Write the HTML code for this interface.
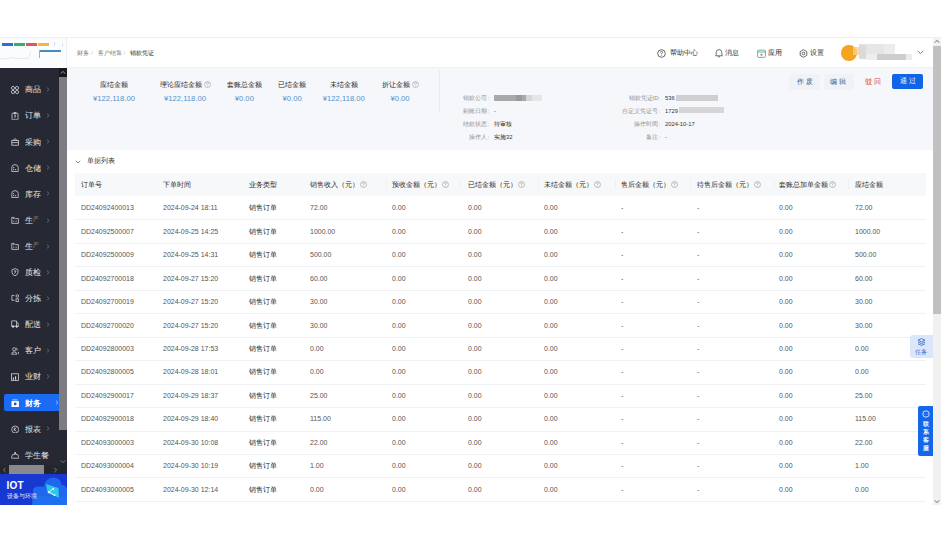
<!DOCTYPE html>
<html><head><meta charset="utf-8">
<style>
*{margin:0;padding:0;box-sizing:border-box}
html,body{width:941px;height:542px;overflow:hidden;background:#fff;font-family:"Liberation Sans",sans-serif;color:#333}
.a{position:absolute}
.t{position:absolute;white-space:nowrap;line-height:1}
#hdr{left:0;top:37px;width:933px;height:31px;background:#fff;border-top:1px solid #eceff3;border-bottom:1px solid #eef0f3}
#logo{left:0;top:37px;width:67px;height:31px;background:#fbfcfd;border-top:1px solid #eceff3;border-right:1px solid #eceff3}
#side{left:0;top:68px;width:67px;height:437px;background:#262933}
#sum{left:67px;top:68px;width:866px;height:82px;background:#f6f7fa}
#tbl{left:67px;top:150px;width:866px;height:355px;background:#fff}
#vs{left:933px;top:37px;width:8px;height:468px;background:#f1f1f1}
.nav{font-size:7px;color:#262626}
.si{position:absolute;left:0;width:59px;height:17px}
.si .tx{position:absolute;left:25px;top:4.5px;font-size:8px;color:#e8e8ea;line-height:1;white-space:nowrap}
.si .ch{position:absolute;left:46px;top:5px;font-size:7px;color:#8a8d96;line-height:1}
.si svg{position:absolute;left:11px;top:4px}
.lbl{font-size:7px;font-weight:500;color:#262626}
.val{font-size:7.7px;color:#5592cf}
.il{font-size:5.8px;color:#8f8f8f;text-align:right}
.iv{font-size:5.8px;color:#333}
.th{font-size:7px;color:#2b2b2b}
.td{font-size:7px;color:#555}
.dn{font-size:7.6px;transform:scaleX(.92);transform-origin:0 0}
.rowline{position:absolute;left:75px;width:851px;height:1px;background:#eff1f4}
.q{display:inline-block;vertical-align:top;margin-top:-0.3px}
</style></head><body>
<div id="hdr" class="a"></div>
<div id="logo" class="a"></div>
<div id="side" class="a"></div>
<div id="sum" class="a"></div>
<div id="tbl" class="a"></div>
<div id="vs" class="a"></div>

<!-- logo -->
<div class="a" style="left:2px;top:43px;width:11px;height:3px;background:#2c6fd1"></div>
<div class="a" style="left:14px;top:43px;width:11px;height:3px;background:#2bb56a"></div>
<div class="a" style="left:26px;top:43px;width:11px;height:3px;background:#e0555a"></div>
<div class="a" style="left:38px;top:43px;width:11px;height:3px;background:#f0b93a"></div>
<div class="a" style="left:54px;top:42px;width:1px;height:4px;background:#dde"></div>
<div class="a" style="left:62px;top:43px;width:1px;height:4px;background:#dde"></div>
<div class="a" style="left:39px;top:50px;width:22px;height:2px;background:#4b86c6"></div>
<div class="a" style="left:39px;top:50px;width:1px;height:8px;background:#8fb2da"></div>
<svg class="a" style="left:0;top:49px" width="38" height="12"><path d="M0 10 L8 9.5 L11 8.5 L14 9.5 L28 9.5 L31 3" fill="none" stroke="#dfe3e8" stroke-width="0.8"/></svg>
<!-- breadcrumb -->
<div class="t" style="left:77px;top:50.6px;font-size:5.9px;color:#767676">财务</div>
<div class="t" style="left:91px;top:50.6px;font-size:5.9px;color:#c8c8c8">/</div>
<div class="t" style="left:98px;top:50.6px;font-size:5.9px;color:#767676">客户结算</div>
<div class="t" style="left:123.5px;top:50.6px;font-size:5.9px;color:#c8c8c8">/</div>
<div class="t" style="left:130px;top:50.6px;font-size:5.9px;color:#1a1a1a">销款凭证</div>
<!-- right nav -->
<svg class="a" style="left:657px;top:48.5px" width="9" height="9" viewBox="0 0 9 9"><circle cx="4.5" cy="4.5" r="3.8" fill="none" stroke="#444" stroke-width="0.8"/><path d="M3.3 3.6 Q3.3 2.4 4.5 2.4 Q5.7 2.4 5.7 3.5 Q5.7 4.2 4.5 4.6 L4.5 5.4" fill="none" stroke="#444" stroke-width="0.7"/><circle cx="4.5" cy="6.5" r="0.45" fill="#444"/></svg>
<div class="t nav" style="left:669.5px;top:49px">帮助中心</div>
<svg class="a" style="left:715px;top:48px" width="8" height="10" viewBox="0 0 8 10"><path d="M1.2 7.2 L1.2 4.5 Q1.2 1.6 4 1.6 Q6.8 1.6 6.8 4.5 L6.8 7.2 L7.4 7.8 L0.6 7.8 Z" fill="none" stroke="#444" stroke-width="0.75"/><path d="M3 8.8 L5 8.8" stroke="#444" stroke-width="0.75"/></svg>
<div class="t nav" style="left:725px;top:49px">消息</div>
<svg class="a" style="left:757px;top:48.5px" width="9" height="9" viewBox="0 0 9 9"><rect x="0.6" y="1.2" width="7.8" height="7.2" rx="0.8" fill="none" stroke="#3aa890" stroke-width="0.8"/><path d="M0.6 3 L8.4 3" stroke="#3aa890" stroke-width="0.8"/><path d="M4.5 4.3 L4.5 7.3 M3 5.8 L6 5.8" stroke="#e07a7a" stroke-width="0.8"/></svg>
<div class="t nav" style="left:767.5px;top:49px">应用</div>
<svg class="a" style="left:798.5px;top:48.5px" width="9" height="9" viewBox="0 0 9 9"><path d="M4.5 0.7 L7.8 2.6 L7.8 6.4 L4.5 8.3 L1.2 6.4 L1.2 2.6 Z" fill="none" stroke="#444" stroke-width="0.8"/><circle cx="4.5" cy="4.5" r="1.3" fill="none" stroke="#444" stroke-width="0.8"/></svg>
<div class="t nav" style="left:810px;top:49px">设置</div>
<div class="a" style="left:841px;top:45px;width:15.5px;height:15.5px;border-radius:50%;background:#f4a420"></div>
<div class="a" style="left:853px;top:47px;width:7px;height:8px;background:#f8cf8a;opacity:.8"></div>
<div class="a" style="left:859px;top:43.5px;width:36px;height:10px;background:#e6e6e6"></div>
<div class="a" style="left:859px;top:45px;width:7px;height:14px;background:#dadada"></div>
<div class="a" style="left:884px;top:43.5px;width:11px;height:10px;background:#ececec"></div>
<div class="a" style="left:866px;top:53.5px;width:11px;height:6px;background:#eeeeee"></div>
<div class="a" style="left:877px;top:53.5px;width:29px;height:6px;background:#cdcdcd"></div>
<div class="a" style="left:906px;top:53.5px;width:6px;height:6px;background:#ebebeb"></div>
<svg class="a" style="left:917px;top:50px" width="7" height="5" viewBox="0 0 7 5"><path d="M0.8 1 L3.5 3.6 L6.2 1" fill="none" stroke="#555" stroke-width="0.8"/></svg>
<!-- sidebar -->
<svg class="a" style="left:11px;top:85.5px" width="8" height="8" viewBox="0 0 8 8" fill="none" stroke="#dcdde0" stroke-width="0.75"><circle cx="2" cy="2" r="1.6"/><circle cx="6" cy="2" r="1.6"/><circle cx="2" cy="6" r="1.6"/><circle cx="6" cy="6" r="1.6"/></svg>
<div class="t" style="left:25px;top:85.3px;font-size:8.3px;color:#e6e7ea">商品</div>
<svg class="a" style="left:46px;top:87.0px" width="4" height="5" viewBox="0 0 4 5"><path d="M1 0.6 L3 2.5 L1 4.4" fill="none" stroke="#7d808a" stroke-width="0.7"/></svg>
<svg class="a" style="left:11px;top:111.6px" width="8" height="8" viewBox="0 0 8 8" fill="none" stroke="#dcdde0" stroke-width="0.75"><rect x="1" y="1.2" width="6" height="6.6" rx="0.6"/><path d="M3 0.6 L5 0.6 L5 1.8 L3 1.8 Z"/><path d="M3.2 3.6 L4.6 3.6 L3.6 6.2"/></svg>
<div class="t" style="left:25px;top:111.4px;font-size:8.3px;color:#e6e7ea">订单</div>
<svg class="a" style="left:46px;top:113.1px" width="4" height="5" viewBox="0 0 4 5"><path d="M1 0.6 L3 2.5 L1 4.4" fill="none" stroke="#7d808a" stroke-width="0.7"/></svg>
<svg class="a" style="left:11px;top:137.7px" width="8" height="8" viewBox="0 0 8 8" fill="none" stroke="#dcdde0" stroke-width="0.75"><rect x="0.8" y="2.6" width="6.8" height="4.6"/><path d="M0.8 4.6 L7.6 4.6"/><path d="M2.6 2.6 Q2.6 0.9 4.1 0.9 Q5.6 0.9 5.6 2.6"/></svg>
<div class="t" style="left:25px;top:137.5px;font-size:8.3px;color:#e6e7ea">采购</div>
<svg class="a" style="left:46px;top:139.2px" width="4" height="5" viewBox="0 0 4 5"><path d="M1 0.6 L3 2.5 L1 4.4" fill="none" stroke="#7d808a" stroke-width="0.7"/></svg>
<svg class="a" style="left:11px;top:163.8px" width="8" height="8" viewBox="0 0 8 8" fill="none" stroke="#dcdde0" stroke-width="0.75"><path d="M0.8 7.5 L0.8 3.2 Q0.9 0.8 4 0.6 Q7.1 0.8 7.2 3.2 L7.2 7.5 Z"/><circle cx="2.7" cy="3.6" r="0.6" fill="#dcdde0" stroke="none"/><circle cx="2.7" cy="5.6" r="0.6" fill="#dcdde0" stroke="none"/><circle cx="4.7" cy="5.6" r="0.6" fill="#dcdde0" stroke="none"/></svg>
<div class="t" style="left:25px;top:163.6px;font-size:8.3px;color:#e6e7ea">仓储</div>
<svg class="a" style="left:46px;top:165.3px" width="4" height="5" viewBox="0 0 4 5"><path d="M1 0.6 L3 2.5 L1 4.4" fill="none" stroke="#7d808a" stroke-width="0.7"/></svg>
<svg class="a" style="left:11px;top:189.9px" width="8" height="8" viewBox="0 0 8 8" fill="none" stroke="#dcdde0" stroke-width="0.75"><path d="M0.8 7.5 L0.8 3.2 Q0.9 0.8 4 0.6 Q7.1 0.8 7.2 3.2 L7.2 7.5 Z"/><circle cx="2.7" cy="3.6" r="0.6" fill="#dcdde0" stroke="none"/><circle cx="2.7" cy="5.6" r="0.6" fill="#dcdde0" stroke="none"/><circle cx="4.7" cy="5.6" r="0.6" fill="#dcdde0" stroke="none"/></svg>
<div class="t" style="left:25px;top:189.7px;font-size:8.3px;color:#e6e7ea">库存</div>
<svg class="a" style="left:46px;top:191.4px" width="4" height="5" viewBox="0 0 4 5"><path d="M1 0.6 L3 2.5 L1 4.4" fill="none" stroke="#7d808a" stroke-width="0.7"/></svg>
<svg class="a" style="left:11px;top:216.0px" width="8" height="8" viewBox="0 0 8 8" fill="none" stroke="#dcdde0" stroke-width="0.75"><path d="M0.8 7.4 L0.8 1.2 L2.6 2.6 L2.6 1.2 L4.4 2.6 L7.4 2.6 L7.4 7.4 Z"/><path d="M2.2 5.2 L3.4 5.2 M4.6 5.2 L5.8 5.2"/></svg>
<div class="t" style="left:25px;top:215.8px;font-size:8.3px;color:#e6e7ea">生<span style="opacity:.55;font-size:6px;vertical-align:2px">产</span></div>
<svg class="a" style="left:46px;top:217.5px" width="4" height="5" viewBox="0 0 4 5"><path d="M1 0.6 L3 2.5 L1 4.4" fill="none" stroke="#7d808a" stroke-width="0.7"/></svg>
<svg class="a" style="left:11px;top:242.1px" width="8" height="8" viewBox="0 0 8 8" fill="none" stroke="#dcdde0" stroke-width="0.75"><path d="M0.8 7.4 L0.8 1.2 L2.6 2.6 L2.6 1.2 L4.4 2.6 L7.4 2.6 L7.4 7.4 Z"/><path d="M2.2 5.2 L3.4 5.2 M4.6 5.2 L5.8 5.2"/></svg>
<div class="t" style="left:25px;top:241.9px;font-size:8.3px;color:#e6e7ea">生<span style="opacity:.55;font-size:6px;vertical-align:2px">产</span></div>
<svg class="a" style="left:46px;top:243.6px" width="4" height="5" viewBox="0 0 4 5"><path d="M1 0.6 L3 2.5 L1 4.4" fill="none" stroke="#7d808a" stroke-width="0.7"/></svg>
<svg class="a" style="left:11px;top:268.2px" width="8" height="8" viewBox="0 0 8 8" fill="none" stroke="#dcdde0" stroke-width="0.75"><path d="M4 0.6 L7 1.8 L7 4.4 Q7 6.8 4 7.8 Q1 6.8 1 4.4 L1 1.8 Z"/><path d="M3 3 L5 3 L3.6 5.6"/></svg>
<div class="t" style="left:25px;top:268.0px;font-size:8.3px;color:#e6e7ea">质检</div>
<svg class="a" style="left:46px;top:269.7px" width="4" height="5" viewBox="0 0 4 5"><path d="M1 0.6 L3 2.5 L1 4.4" fill="none" stroke="#7d808a" stroke-width="0.7"/></svg>
<svg class="a" style="left:11px;top:294.3px" width="8" height="8" viewBox="0 0 8 8" fill="none" stroke="#dcdde0" stroke-width="0.75"><path d="M3.4 1.4 L0.9 1.4 L0.9 6.3 L3.4 6.3"/><circle cx="6.3" cy="2" r="1.3"/><rect x="5" y="4.9" width="2.8" height="2.7"/></svg>
<div class="t" style="left:25px;top:294.1px;font-size:8.3px;color:#e6e7ea">分拣</div>
<svg class="a" style="left:46px;top:295.8px" width="4" height="5" viewBox="0 0 4 5"><path d="M1 0.6 L3 2.5 L1 4.4" fill="none" stroke="#7d808a" stroke-width="0.7"/></svg>
<svg class="a" style="left:11px;top:320.4px" width="8" height="8" viewBox="0 0 8 8" fill="none" stroke="#dcdde0" stroke-width="0.75"><path d="M0.7 6.2 L0.7 0.9 L5.6 0.9 L5.6 6.2 Z"/><path d="M5.6 2.8 L6.8 2.8 L7.8 4.4 L7.8 6.2 L5.6 6.2"/><circle cx="2" cy="6.6" r="0.8" fill="#dcdde0"/><circle cx="5.7" cy="6.6" r="0.8" fill="#dcdde0"/></svg>
<div class="t" style="left:25px;top:320.2px;font-size:8.3px;color:#e6e7ea">配送</div>
<svg class="a" style="left:46px;top:321.9px" width="4" height="5" viewBox="0 0 4 5"><path d="M1 0.6 L3 2.5 L1 4.4" fill="none" stroke="#7d808a" stroke-width="0.7"/></svg>
<svg class="a" style="left:11px;top:346.5px" width="8" height="8" viewBox="0 0 8 8" fill="none" stroke="#dcdde0" stroke-width="0.75"><circle cx="3.2" cy="2.3" r="1.6"/><path d="M5.2 0.9 Q6.8 1.3 6 3.4"/><path d="M0.6 7.2 Q0.6 4.9 3.2 4.9 Q5.8 4.9 5.8 7.2 Z"/><path d="M7.4 4.9 L7.4 7.2"/></svg>
<div class="t" style="left:25px;top:346.3px;font-size:8.3px;color:#e6e7ea">客户</div>
<svg class="a" style="left:46px;top:348.0px" width="4" height="5" viewBox="0 0 4 5"><path d="M1 0.6 L3 2.5 L1 4.4" fill="none" stroke="#7d808a" stroke-width="0.7"/></svg>
<svg class="a" style="left:11px;top:372.6px" width="8" height="8" viewBox="0 0 8 8" fill="none" stroke="#dcdde0" stroke-width="0.75"><rect x="0.6" y="0.8" width="7" height="6.6"/><path d="M2.4 6.8 L2.4 4.6 M4.6 6.8 L4.6 3.2" stroke-width="1.1"/></svg>
<div class="t" style="left:25px;top:372.4px;font-size:8.3px;color:#e6e7ea">业财</div>
<svg class="a" style="left:46px;top:374.1px" width="4" height="5" viewBox="0 0 4 5"><path d="M1 0.6 L3 2.5 L1 4.4" fill="none" stroke="#7d808a" stroke-width="0.7"/></svg>
<div class="a" style="left:4px;top:394px;width:55px;height:17px;background:#1a6cf5;border-radius:2px 0 0 2px"></div>
<svg class="a" style="left:11px;top:398.8px" width="9" height="9" viewBox="0 0 9 9"><path d="M1.5 0.9 L6.5 0.9" stroke="#fff" stroke-width="0.7"/><rect x="0.5" y="2.1" width="7.4" height="5.9" fill="#fff"/><circle cx="4.2" cy="4.9" r="1.4" fill="#2a4fa8"/></svg>
<div class="t" style="left:25px;top:398.5px;font-size:8.3px;font-weight:bold;color:#fff">财务</div>
<svg class="a" style="left:55px;top:400.2px" width="4" height="5" viewBox="0 0 4 5"><path d="M1 0.6 L3 2.5 L1 4.4" fill="none" stroke="#cfe0ff" stroke-width="0.7"/></svg>
<svg class="a" style="left:11px;top:424.8px" width="8" height="8" viewBox="0 0 8 8" fill="none" stroke="#dcdde0" stroke-width="0.75"><circle cx="4.2" cy="4.5" r="3.5"/><path d="M5.4 2.6 L3.3 4.6 L5.4 6.2 M3.3 2.6 L3.3 5.8"/></svg>
<div class="t" style="left:25px;top:424.6px;font-size:8.3px;color:#e6e7ea">报表</div>
<svg class="a" style="left:46px;top:426.3px" width="4" height="5" viewBox="0 0 4 5"><path d="M1 0.6 L3 2.5 L1 4.4" fill="none" stroke="#7d808a" stroke-width="0.7"/></svg>
<svg class="a" style="left:11px;top:450.9px" width="8" height="8" viewBox="0 0 8 8" fill="none" stroke="#dcdde0" stroke-width="0.75"><path d="M0.7 7.2 L7.7 7.2 L7.7 5.8 Q7.7 3.1 4.2 3.1 Q0.7 3.1 0.7 5.8 Z"/><path d="M3.4 2.4 L4.2 1.2 L5 2.4 Z" fill="#dcdde0"/></svg>
<div class="t" style="left:25px;top:450.7px;font-size:8.3px;color:#e6e7ea">学生餐</div>
<div class="a" style="left:59px;top:68px;width:8px;height:9px;background:#17191f"></div>
<svg class="a" style="left:60px;top:70px" width="6" height="5" viewBox="0 0 6 5"><path d="M0.8 3.6 L3 1.4 L5.2 3.6" fill="none" stroke="#aaa" stroke-width="0.9"/></svg>
<div class="a" style="left:59px;top:77px;width:8px;height:353px;background:#7c7c82"></div>
<svg class="a" style="left:60px;top:459px" width="6" height="5" viewBox="0 0 6 5"><path d="M0.8 1.4 L3 3.6 L5.2 1.4" fill="none" stroke="#888" stroke-width="0.9"/></svg>
<div class="a" style="left:0;top:465px;width:67px;height:9px;background:#23262d"></div>
<div class="a" style="left:9px;top:465px;width:35px;height:9px;background:#8a8a8e"></div>
<svg class="a" style="left:2px;top:467px" width="5" height="6" viewBox="0 0 5 6"><path d="M3.6 0.8 L1.4 3 L3.6 5.2" fill="none" stroke="#888" stroke-width="0.9"/></svg>
<svg class="a" style="left:53px;top:467px" width="5" height="6" viewBox="0 0 5 6"><path d="M1.4 0.8 L3.6 3 L1.4 5.2" fill="none" stroke="#888" stroke-width="0.9"/></svg>
<div class="a" style="left:0;top:474px;width:67px;height:31px;background:#1739d2;overflow:hidden">
<svg class="a" style="left:0;top:0" width="67" height="31" viewBox="0 0 67 31">
<path d="M32 31 L33 16 Q34 12 40 12.5 L44 12.5 Q45 4 53.5 3.5 Q61 4 61.5 11 Q67 11 67 16 L67 31 Z" fill="#1f68ee"/>
<path d="M33 31 L34 22 L60 22 L67 24 L67 31 Z" fill="#2274f3" opacity=".6"/>
<path d="M46 10 L58.5 14 L59 23.7 L47.5 19 Z" fill="#2ec6ea"/>
<path d="M53.3 14.8 L48.8 18 L54.6 21.2" fill="none" stroke="#dffaff" stroke-width="0.9"/>
<circle cx="53.3" cy="14.8" r="0.9" fill="#fff"/><circle cx="48.8" cy="18" r="0.9" fill="#fff"/><circle cx="54.6" cy="21.2" r="0.9" fill="#fff"/>
</svg>
</div>
<div class="t" style="left:6.5px;top:481px;font-size:10px;font-weight:bold;color:#fff;letter-spacing:0.2px">IOT</div>
<div class="t" style="left:6.5px;top:493.8px;font-size:5.7px;font-weight:500;color:#e6edff">设备与环境</div>
<!-- summary -->
<div class="t lbl" style="left:54px;width:120px;text-align:center;top:81.4px">应结金额</div>
<div class="t val" style="left:54px;width:120px;text-align:center;top:95.2px">¥122,118.00</div>
<div class="t lbl" style="left:125px;width:120px;text-align:center;top:81.4px">理论应结金额<svg class="q" style="margin-left:2px" width="7" height="7" viewBox="0 0 7 7"><circle cx="3.5" cy="3.5" r="3" fill="none" stroke="#9a9a9a" stroke-width="0.6"/><path d="M2.5 2.7 Q2.5 1.7 3.5 1.7 Q4.5 1.7 4.5 2.6 Q4.5 3.2 3.5 3.6 L3.5 4.2" fill="none" stroke="#9a9a9a" stroke-width="0.6"/><circle cx="3.5" cy="5.2" r="0.35" fill="#9a9a9a"/></svg></div>
<div class="t val" style="left:125px;width:120px;text-align:center;top:95.2px">¥122,118.00</div>
<div class="t lbl" style="left:184.3px;width:120px;text-align:center;top:81.4px">套账总金额</div>
<div class="t val" style="left:184.3px;width:120px;text-align:center;top:95.2px">¥0.00</div>
<div class="t lbl" style="left:232.2px;width:120px;text-align:center;top:81.4px">已结金额</div>
<div class="t val" style="left:232.2px;width:120px;text-align:center;top:95.2px">¥0.00</div>
<div class="t lbl" style="left:283.8px;width:120px;text-align:center;top:81.4px">未结金额</div>
<div class="t val" style="left:283.8px;width:120px;text-align:center;top:95.2px">¥122,118.00</div>
<div class="t lbl" style="left:340px;width:120px;text-align:center;top:81.4px">折让金额<svg class="q" style="margin-left:2px" width="7" height="7" viewBox="0 0 7 7"><circle cx="3.5" cy="3.5" r="3" fill="none" stroke="#9a9a9a" stroke-width="0.6"/><path d="M2.5 2.7 Q2.5 1.7 3.5 1.7 Q4.5 1.7 4.5 2.6 Q4.5 3.2 3.5 3.6 L3.5 4.2" fill="none" stroke="#9a9a9a" stroke-width="0.6"/><circle cx="3.5" cy="5.2" r="0.35" fill="#9a9a9a"/></svg></div>
<div class="t val" style="left:340px;width:120px;text-align:center;top:95.2px">¥0.00</div>
<div class="a" style="left:439px;top:70px;width:1px;height:42px;background:#e6e9ee"></div>
<div class="t il" style="left:400px;width:89px;top:95.50px">销款公司:</div>
<div class="a" style="left:494px;top:95.2px;width:32px;height:5.6px;background:#a9a9ab"></div><div class="a" style="left:526px;top:95.2px;width:6px;height:5.6px;background:#d6d6d8"></div><div class="a" style="left:516px;top:95.2px;width:6px;height:5.6px;background:#9a9a9c"></div><div class="a" style="left:532px;top:95.2px;width:10px;height:5.6px;background:#e6e6e8"></div>
<div class="t il" style="left:400px;width:89px;top:108.50px">到账日期:</div>
<div class="t iv" style="left:494px;top:108.50px">-</div>
<div class="t il" style="left:400px;width:89px;top:121.50px">结款状态:</div>
<div class="t iv" style="left:494px;top:121.50px">待审核</div>
<div class="t il" style="left:400px;width:89px;top:134.50px">操作人:</div>
<div class="t iv" style="left:494px;top:134.50px">实施32</div>
<div class="t il" style="left:560px;width:100px;top:95.50px">销款凭证ID:</div>
<div class="t iv" style="left:665px;top:95.50px">536</div><div class="a" style="left:676px;top:95.2px;width:42px;height:5.6px;background:#cfcfd1"></div>
<div class="t il" style="left:560px;width:100px;top:108.50px">自定义凭证号:</div>
<div class="t iv" style="left:665px;top:108.50px">1729</div><div class="a" style="left:679px;top:107.2px;width:45px;height:5.4px;background:#d6d6d8"></div>
<div class="t il" style="left:560px;width:100px;top:121.50px">操作时间:</div>
<div class="t iv" style="left:665px;top:121.50px">2024-10-17</div>
<div class="t il" style="left:560px;width:100px;top:134.50px">备注:</div>
<div class="t iv" style="left:665px;top:134.50px">-</div>
<div class="a" style="left:789px;top:74px;width:31px;height:16px;background:#eff2f6;border-radius:2px"></div>
<div class="t" style="left:796.5px;top:78.5px;font-size:6.8px;color:#2f6299;letter-spacing:2px">作废</div>
<div class="a" style="left:824px;top:74px;width:30px;height:16px;background:#eff2f6;border-radius:2px"></div>
<div class="t" style="left:830px;top:78.5px;font-size:6.8px;color:#2f6299;letter-spacing:2px">编辑</div>
<div class="t" style="left:865px;top:78.5px;font-size:6.8px;color:#d3464d;letter-spacing:2px">驳回</div>
<div class="a" style="left:892px;top:73.5px;width:31px;height:15.5px;background:#1264e6;border-radius:2px"></div>
<div class="t" style="left:899.5px;top:78px;font-size:6.8px;color:#fff;letter-spacing:2px">通过</div>
<!-- table -->
<svg class="a" style="left:75px;top:159.5px" width="6" height="4" viewBox="0 0 6 4"><path d="M0.8 0.8 L3 3 L5.2 0.8" fill="none" stroke="#666" stroke-width="0.8"/></svg>
<div class="t" style="left:87px;top:158.3px;font-size:6.6px;color:#333">单据列表</div>
<div class="a" style="left:75px;top:172.5px;width:851px;height:23.5px;background:#f7f8fa"></div>
<div class="t th" style="left:81px;top:181px">订单号</div>
<div class="t th" style="left:162.5px;top:181px">下单时间</div>
<div class="t th" style="left:248.8px;top:181px">业务类型</div>
<div class="t th" style="left:310px;top:181px">销售收入（元）<svg class="q" style="margin-left:1px" width="7" height="7" viewBox="0 0 7 7"><circle cx="3.5" cy="3.5" r="3" fill="none" stroke="#9a9a9a" stroke-width="0.6"/><path d="M2.5 2.7 Q2.5 1.7 3.5 1.7 Q4.5 1.7 4.5 2.6 Q4.5 3.2 3.5 3.6 L3.5 4.2" fill="none" stroke="#9a9a9a" stroke-width="0.6"/><circle cx="3.5" cy="5.2" r="0.35" fill="#9a9a9a"/></svg></div>
<div class="t th" style="left:392px;top:181px">预收金额（元）<svg class="q" style="margin-left:1px" width="7" height="7" viewBox="0 0 7 7"><circle cx="3.5" cy="3.5" r="3" fill="none" stroke="#9a9a9a" stroke-width="0.6"/><path d="M2.5 2.7 Q2.5 1.7 3.5 1.7 Q4.5 1.7 4.5 2.6 Q4.5 3.2 3.5 3.6 L3.5 4.2" fill="none" stroke="#9a9a9a" stroke-width="0.6"/><circle cx="3.5" cy="5.2" r="0.35" fill="#9a9a9a"/></svg></div>
<div class="t th" style="left:467.6px;top:181px">已结金额（元）<svg class="q" style="margin-left:1px" width="7" height="7" viewBox="0 0 7 7"><circle cx="3.5" cy="3.5" r="3" fill="none" stroke="#9a9a9a" stroke-width="0.6"/><path d="M2.5 2.7 Q2.5 1.7 3.5 1.7 Q4.5 1.7 4.5 2.6 Q4.5 3.2 3.5 3.6 L3.5 4.2" fill="none" stroke="#9a9a9a" stroke-width="0.6"/><circle cx="3.5" cy="5.2" r="0.35" fill="#9a9a9a"/></svg></div>
<div class="t th" style="left:543.5px;top:181px">未结金额（元）<svg class="q" style="margin-left:1px" width="7" height="7" viewBox="0 0 7 7"><circle cx="3.5" cy="3.5" r="3" fill="none" stroke="#9a9a9a" stroke-width="0.6"/><path d="M2.5 2.7 Q2.5 1.7 3.5 1.7 Q4.5 1.7 4.5 2.6 Q4.5 3.2 3.5 3.6 L3.5 4.2" fill="none" stroke="#9a9a9a" stroke-width="0.6"/><circle cx="3.5" cy="5.2" r="0.35" fill="#9a9a9a"/></svg></div>
<div class="t th" style="left:620.8px;top:181px">售后金额（元）<svg class="q" style="margin-left:1px" width="7" height="7" viewBox="0 0 7 7"><circle cx="3.5" cy="3.5" r="3" fill="none" stroke="#9a9a9a" stroke-width="0.6"/><path d="M2.5 2.7 Q2.5 1.7 3.5 1.7 Q4.5 1.7 4.5 2.6 Q4.5 3.2 3.5 3.6 L3.5 4.2" fill="none" stroke="#9a9a9a" stroke-width="0.6"/><circle cx="3.5" cy="5.2" r="0.35" fill="#9a9a9a"/></svg></div>
<div class="t th" style="left:696.7px;top:181px">待售后金额（元）<svg class="q" style="margin-left:1px" width="7" height="7" viewBox="0 0 7 7"><circle cx="3.5" cy="3.5" r="3" fill="none" stroke="#9a9a9a" stroke-width="0.6"/><path d="M2.5 2.7 Q2.5 1.7 3.5 1.7 Q4.5 1.7 4.5 2.6 Q4.5 3.2 3.5 3.6 L3.5 4.2" fill="none" stroke="#9a9a9a" stroke-width="0.6"/><circle cx="3.5" cy="5.2" r="0.35" fill="#9a9a9a"/></svg></div>
<div class="t th" style="left:778.5px;top:181px">套账总加单金额<svg class="q" style="margin-left:1.5px" width="7" height="7" viewBox="0 0 7 7"><circle cx="3.5" cy="3.5" r="3" fill="none" stroke="#9a9a9a" stroke-width="0.6"/><path d="M2.5 2.7 Q2.5 1.7 3.5 1.7 Q4.5 1.7 4.5 2.6 Q4.5 3.2 3.5 3.6 L3.5 4.2" fill="none" stroke="#9a9a9a" stroke-width="0.6"/><circle cx="3.5" cy="5.2" r="0.35" fill="#9a9a9a"/></svg></div>
<div class="t th" style="left:855px;top:181px">应结金额</div>
<div class="a" style="left:385.8px;top:179px;width:1px;height:10px;background:#eef0f2"></div>
<div class="a" style="left:460px;top:179px;width:1px;height:10px;background:#eef0f2"></div>
<div class="a" style="left:538px;top:179px;width:1px;height:10px;background:#eef0f2"></div>
<div class="a" style="left:614.9px;top:179px;width:1px;height:10px;background:#eef0f2"></div>
<div class="a" style="left:689.5px;top:179px;width:1px;height:10px;background:#eef0f2"></div>
<div class="a" style="left:773.5px;top:179px;width:1px;height:10px;background:#eef0f2"></div>
<div class="a" style="left:848.1px;top:179px;width:1px;height:10px;background:#eef0f2"></div>
<div class="rowline" style="top:219.45px"></div>
<div class="t td dn" style="left:81px;top:204.27px">DD24092400013</div>
<div class="t td dn" style="left:162.5px;top:204.27px">2024-09-24 18:11</div>
<div class="t td" style="left:249px;top:204.32px;color:#222">销售订单</div>
<div class="t td dn" style="left:310px;top:204.27px">72.00</div>
<div class="t td dn" style="left:392px;top:204.27px">0.00</div>
<div class="t td dn" style="left:467.6px;top:204.27px">0.00</div>
<div class="t td dn" style="left:543.5px;top:204.27px">0.00</div>
<div class="t td dn" style="left:621px;top:204.27px">-</div>
<div class="t td dn" style="left:697px;top:204.27px">-</div>
<div class="t td dn" style="left:778.5px;top:204.27px">0.00</div>
<div class="t td dn" style="left:855px;top:204.27px">72.00</div>
<div class="rowline" style="top:242.90px"></div>
<div class="t td dn" style="left:81px;top:227.72px">DD24092500007</div>
<div class="t td dn" style="left:162.5px;top:227.72px">2024-09-25 14:25</div>
<div class="t td" style="left:249px;top:227.77px;color:#222">销售订单</div>
<div class="t td dn" style="left:310px;top:227.72px">1000.00</div>
<div class="t td dn" style="left:392px;top:227.72px">0.00</div>
<div class="t td dn" style="left:467.6px;top:227.72px">0.00</div>
<div class="t td dn" style="left:543.5px;top:227.72px">0.00</div>
<div class="t td dn" style="left:621px;top:227.72px">-</div>
<div class="t td dn" style="left:697px;top:227.72px">-</div>
<div class="t td dn" style="left:778.5px;top:227.72px">0.00</div>
<div class="t td dn" style="left:855px;top:227.72px">1000.00</div>
<div class="rowline" style="top:266.35px"></div>
<div class="t td dn" style="left:81px;top:251.17px">DD24092500009</div>
<div class="t td dn" style="left:162.5px;top:251.17px">2024-09-25 14:31</div>
<div class="t td" style="left:249px;top:251.22px;color:#222">销售订单</div>
<div class="t td dn" style="left:310px;top:251.17px">500.00</div>
<div class="t td dn" style="left:392px;top:251.17px">0.00</div>
<div class="t td dn" style="left:467.6px;top:251.17px">0.00</div>
<div class="t td dn" style="left:543.5px;top:251.17px">0.00</div>
<div class="t td dn" style="left:621px;top:251.17px">-</div>
<div class="t td dn" style="left:697px;top:251.17px">-</div>
<div class="t td dn" style="left:778.5px;top:251.17px">0.00</div>
<div class="t td dn" style="left:855px;top:251.17px">500.00</div>
<div class="rowline" style="top:289.80px"></div>
<div class="t td dn" style="left:81px;top:274.63px">DD24092700018</div>
<div class="t td dn" style="left:162.5px;top:274.63px">2024-09-27 15:20</div>
<div class="t td" style="left:249px;top:274.68px;color:#222">销售订单</div>
<div class="t td dn" style="left:310px;top:274.63px">60.00</div>
<div class="t td dn" style="left:392px;top:274.63px">0.00</div>
<div class="t td dn" style="left:467.6px;top:274.63px">0.00</div>
<div class="t td dn" style="left:543.5px;top:274.63px">0.00</div>
<div class="t td dn" style="left:621px;top:274.63px">-</div>
<div class="t td dn" style="left:697px;top:274.63px">-</div>
<div class="t td dn" style="left:778.5px;top:274.63px">0.00</div>
<div class="t td dn" style="left:855px;top:274.63px">60.00</div>
<div class="rowline" style="top:313.25px"></div>
<div class="t td dn" style="left:81px;top:298.08px">DD24092700019</div>
<div class="t td dn" style="left:162.5px;top:298.08px">2024-09-27 15:20</div>
<div class="t td" style="left:249px;top:298.13px;color:#222">销售订单</div>
<div class="t td dn" style="left:310px;top:298.08px">30.00</div>
<div class="t td dn" style="left:392px;top:298.08px">0.00</div>
<div class="t td dn" style="left:467.6px;top:298.08px">0.00</div>
<div class="t td dn" style="left:543.5px;top:298.08px">0.00</div>
<div class="t td dn" style="left:621px;top:298.08px">-</div>
<div class="t td dn" style="left:697px;top:298.08px">-</div>
<div class="t td dn" style="left:778.5px;top:298.08px">0.00</div>
<div class="t td dn" style="left:855px;top:298.08px">30.00</div>
<div class="rowline" style="top:336.70px"></div>
<div class="t td dn" style="left:81px;top:321.53px">DD24092700020</div>
<div class="t td dn" style="left:162.5px;top:321.53px">2024-09-27 15:20</div>
<div class="t td" style="left:249px;top:321.58px;color:#222">销售订单</div>
<div class="t td dn" style="left:310px;top:321.53px">30.00</div>
<div class="t td dn" style="left:392px;top:321.53px">0.00</div>
<div class="t td dn" style="left:467.6px;top:321.53px">0.00</div>
<div class="t td dn" style="left:543.5px;top:321.53px">0.00</div>
<div class="t td dn" style="left:621px;top:321.53px">-</div>
<div class="t td dn" style="left:697px;top:321.53px">-</div>
<div class="t td dn" style="left:778.5px;top:321.53px">0.00</div>
<div class="t td dn" style="left:855px;top:321.53px">30.00</div>
<div class="rowline" style="top:360.15px"></div>
<div class="t td dn" style="left:81px;top:344.98px">DD24092800003</div>
<div class="t td dn" style="left:162.5px;top:344.98px">2024-09-28 17:53</div>
<div class="t td" style="left:249px;top:345.03px;color:#222">销售订单</div>
<div class="t td dn" style="left:310px;top:344.98px">0.00</div>
<div class="t td dn" style="left:392px;top:344.98px">0.00</div>
<div class="t td dn" style="left:467.6px;top:344.98px">0.00</div>
<div class="t td dn" style="left:543.5px;top:344.98px">0.00</div>
<div class="t td dn" style="left:621px;top:344.98px">-</div>
<div class="t td dn" style="left:697px;top:344.98px">-</div>
<div class="t td dn" style="left:778.5px;top:344.98px">0.00</div>
<div class="t td dn" style="left:855px;top:344.98px">0.00</div>
<div class="rowline" style="top:383.60px"></div>
<div class="t td dn" style="left:81px;top:368.43px">DD24092800005</div>
<div class="t td dn" style="left:162.5px;top:368.43px">2024-09-28 18:01</div>
<div class="t td" style="left:249px;top:368.48px;color:#222">销售订单</div>
<div class="t td dn" style="left:310px;top:368.43px">0.00</div>
<div class="t td dn" style="left:392px;top:368.43px">0.00</div>
<div class="t td dn" style="left:467.6px;top:368.43px">0.00</div>
<div class="t td dn" style="left:543.5px;top:368.43px">0.00</div>
<div class="t td dn" style="left:621px;top:368.43px">-</div>
<div class="t td dn" style="left:697px;top:368.43px">-</div>
<div class="t td dn" style="left:778.5px;top:368.43px">0.00</div>
<div class="t td dn" style="left:855px;top:368.43px">0.00</div>
<div class="rowline" style="top:407.05px"></div>
<div class="t td dn" style="left:81px;top:391.88px">DD24092900017</div>
<div class="t td dn" style="left:162.5px;top:391.88px">2024-09-29 18:37</div>
<div class="t td" style="left:249px;top:391.93px;color:#222">销售订单</div>
<div class="t td dn" style="left:310px;top:391.88px">25.00</div>
<div class="t td dn" style="left:392px;top:391.88px">0.00</div>
<div class="t td dn" style="left:467.6px;top:391.88px">0.00</div>
<div class="t td dn" style="left:543.5px;top:391.88px">0.00</div>
<div class="t td dn" style="left:621px;top:391.88px">-</div>
<div class="t td dn" style="left:697px;top:391.88px">-</div>
<div class="t td dn" style="left:778.5px;top:391.88px">0.00</div>
<div class="t td dn" style="left:855px;top:391.88px">25.00</div>
<div class="rowline" style="top:430.50px"></div>
<div class="t td dn" style="left:81px;top:415.32px">DD24092900018</div>
<div class="t td dn" style="left:162.5px;top:415.32px">2024-09-29 18:40</div>
<div class="t td" style="left:249px;top:415.37px;color:#222">销售订单</div>
<div class="t td dn" style="left:310px;top:415.32px">115.00</div>
<div class="t td dn" style="left:392px;top:415.32px">0.00</div>
<div class="t td dn" style="left:467.6px;top:415.32px">0.00</div>
<div class="t td dn" style="left:543.5px;top:415.32px">0.00</div>
<div class="t td dn" style="left:621px;top:415.32px">-</div>
<div class="t td dn" style="left:697px;top:415.32px">-</div>
<div class="t td dn" style="left:778.5px;top:415.32px">0.00</div>
<div class="t td dn" style="left:855px;top:415.32px">115.00</div>
<div class="rowline" style="top:453.95px"></div>
<div class="t td dn" style="left:81px;top:438.78px">DD24093000003</div>
<div class="t td dn" style="left:162.5px;top:438.78px">2024-09-30 10:08</div>
<div class="t td" style="left:249px;top:438.83px;color:#222">销售订单</div>
<div class="t td dn" style="left:310px;top:438.78px">22.00</div>
<div class="t td dn" style="left:392px;top:438.78px">0.00</div>
<div class="t td dn" style="left:467.6px;top:438.78px">0.00</div>
<div class="t td dn" style="left:543.5px;top:438.78px">0.00</div>
<div class="t td dn" style="left:621px;top:438.78px">-</div>
<div class="t td dn" style="left:697px;top:438.78px">-</div>
<div class="t td dn" style="left:778.5px;top:438.78px">0.00</div>
<div class="t td dn" style="left:855px;top:438.78px">22.00</div>
<div class="rowline" style="top:477.40px"></div>
<div class="t td dn" style="left:81px;top:462.23px">DD24093000004</div>
<div class="t td dn" style="left:162.5px;top:462.23px">2024-09-30 10:19</div>
<div class="t td" style="left:249px;top:462.28px;color:#222">销售订单</div>
<div class="t td dn" style="left:310px;top:462.23px">1.00</div>
<div class="t td dn" style="left:392px;top:462.23px">0.00</div>
<div class="t td dn" style="left:467.6px;top:462.23px">0.00</div>
<div class="t td dn" style="left:543.5px;top:462.23px">0.00</div>
<div class="t td dn" style="left:621px;top:462.23px">-</div>
<div class="t td dn" style="left:697px;top:462.23px">-</div>
<div class="t td dn" style="left:778.5px;top:462.23px">0.00</div>
<div class="t td dn" style="left:855px;top:462.23px">1.00</div>
<div class="rowline" style="top:500.85px"></div>
<div class="t td dn" style="left:81px;top:485.67px">DD24093000005</div>
<div class="t td dn" style="left:162.5px;top:485.67px">2024-09-30 12:14</div>
<div class="t td" style="left:249px;top:485.72px;color:#222">销售订单</div>
<div class="t td dn" style="left:310px;top:485.67px">0.00</div>
<div class="t td dn" style="left:392px;top:485.67px">0.00</div>
<div class="t td dn" style="left:467.6px;top:485.67px">0.00</div>
<div class="t td dn" style="left:543.5px;top:485.67px">0.00</div>
<div class="t td dn" style="left:621px;top:485.67px">-</div>
<div class="t td dn" style="left:697px;top:485.67px">-</div>
<div class="t td dn" style="left:778.5px;top:485.67px">0.00</div>
<div class="t td dn" style="left:855px;top:485.67px">0.00</div>
<!-- widgets -->
<div class="a" style="left:910px;top:334.5px;width:23px;height:23.5px;background:#dbe6fa;border-radius:3px 0 0 3px"></div>
<svg class="a" style="left:917px;top:338px" width="9" height="8" viewBox="0 0 9 8"><path d="M4.5 0.6 L8 2.2 L4.5 3.8 L1 2.2 Z" fill="none" stroke="#2a64c8" stroke-width="0.8"/><path d="M1 4 L4.5 5.6 L8 4 M1 5.8 L4.5 7.4 L8 5.8" fill="none" stroke="#2a64c8" stroke-width="0.8"/></svg>
<div class="t" style="left:914.5px;top:349.5px;font-size:5.8px;color:#2a64c8">任务</div>
<div class="a" style="left:918px;top:405.5px;width:15px;height:50px;background:#1467e8;border-radius:2px 0 0 2px"></div>
<svg class="a" style="left:921.5px;top:410.4px" width="8" height="8" viewBox="0 0 8 8"><circle cx="4" cy="4" r="3.2" fill="none" stroke="#fff" stroke-width="0.8"/><circle cx="2.7" cy="4" r="0.35" fill="#fff"/><circle cx="4" cy="4" r="0.35" fill="#fff"/><circle cx="5.3" cy="4" r="0.35" fill="#fff"/></svg>
<div class="t" style="left:922.5px;top:420.8px;font-size:5.8px;font-weight:bold;color:#fff;width:6px;line-height:7.95px;white-space:normal">联系客服</div>
<!-- page scrollbar -->
<div class="a" style="left:933px;top:46px;width:8px;height:268px;background:#c1c1c1"></div>
<svg class="a" style="left:934px;top:39px" width="6" height="5" viewBox="0 0 6 5"><path d="M0.8 3.6 L3 1.4 L5.2 3.6" fill="none" stroke="#555" stroke-width="0.9"/></svg>
<svg class="a" style="left:934px;top:499px" width="6" height="5" viewBox="0 0 6 5"><path d="M0.8 1.4 L3 3.6 L5.2 1.4" fill="none" stroke="#555" stroke-width="0.9"/></svg>
</body></html>
